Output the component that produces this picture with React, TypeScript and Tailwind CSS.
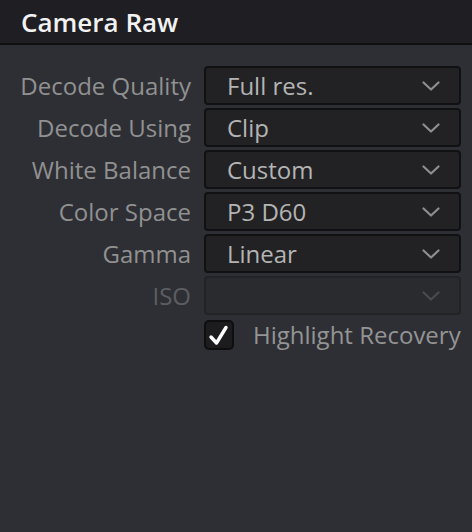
const font = { fontFamily: '"Open Sans", "Noto Sans", sans-serif' };

function Chevron({ dim }: { dim?: boolean }) {
  return (
    <svg width="18" height="10" viewBox="0 0 18 10" fill="none" className="shrink-0">
      <path
        d="M1.5 1.5 L9 8.5 L16.5 1.5"
        stroke={dim ? "#4a4b50" : "#8e8e8e"}
        strokeWidth="2.2"
        strokeLinecap="round"
        strokeLinejoin="round"
      />
    </svg>
  );
}

const rows = [
  { label: "Decode Quality", value: "Full res." },
  { label: "Decode Using", value: "Clip" },
  { label: "White Balance", value: "Custom" },
  { label: "Color Space", value: "P3 D60" },
  { label: "Gamma", value: "Linear" },
];

export default function App() {
  return (
    <div className="flex h-[532px] w-[472px] flex-col bg-[#2e2f34]" style={font}>
      <div className="flex h-[45px] shrink-0 items-center border-b-2 border-[#101012] bg-[#1f1f23] px-[21px]">
        <span className="text-[26px] font-semibold leading-none text-[#f2f2f2]">Camera Raw</span>
      </div>

      <div className="grid grid-cols-[191px_257px] gap-x-[13px] gap-y-[3px] pt-[21px]">
        {rows.map((r) => (
          <div key={r.label} className="contents">
            <div className="flex h-[39px] items-center justify-end whitespace-nowrap text-[24px] leading-none text-[#919191]">
              {r.label}
            </div>
            <div className="flex h-[39px] items-center justify-between rounded-[4px] border-2 border-[#111113] bg-[#222224] pl-[21px] pr-[19px] text-[24px] leading-none text-[#b4b4b4]">
              <span>{r.value}</span>
              <Chevron />
            </div>
          </div>
        ))}

        <div className="flex h-[39px] items-center justify-end text-[24px] leading-none text-[#5c5d62]">ISO</div>
        <div className="flex h-[39px] items-center justify-end rounded-[4px] border-2 border-[#222326] bg-[#2a2b2f] pr-[19px]">
          <Chevron dim />
        </div>

        <div />
        <div className="mt-[2px] flex h-[30px] items-center gap-[19px]">
          <div className="flex h-[30px] w-[30px] shrink-0 items-center justify-center rounded-[5px] border-2 border-[#0e0e10] bg-[#1c1c1e]">
            <svg width="22" height="22" viewBox="0 0 22 22" fill="none">
              <path
                d="M3 13 L8.5 19 L18 3.5"
                stroke="#ffffff"
                strokeWidth="3.4"
                strokeLinecap="round"
                strokeLinejoin="round"
              />
            </svg>
          </div>
          <span className="whitespace-nowrap text-[24px] leading-none text-[#949494]">Highlight Recovery</span>
        </div>
      </div>
    </div>
  );
}
